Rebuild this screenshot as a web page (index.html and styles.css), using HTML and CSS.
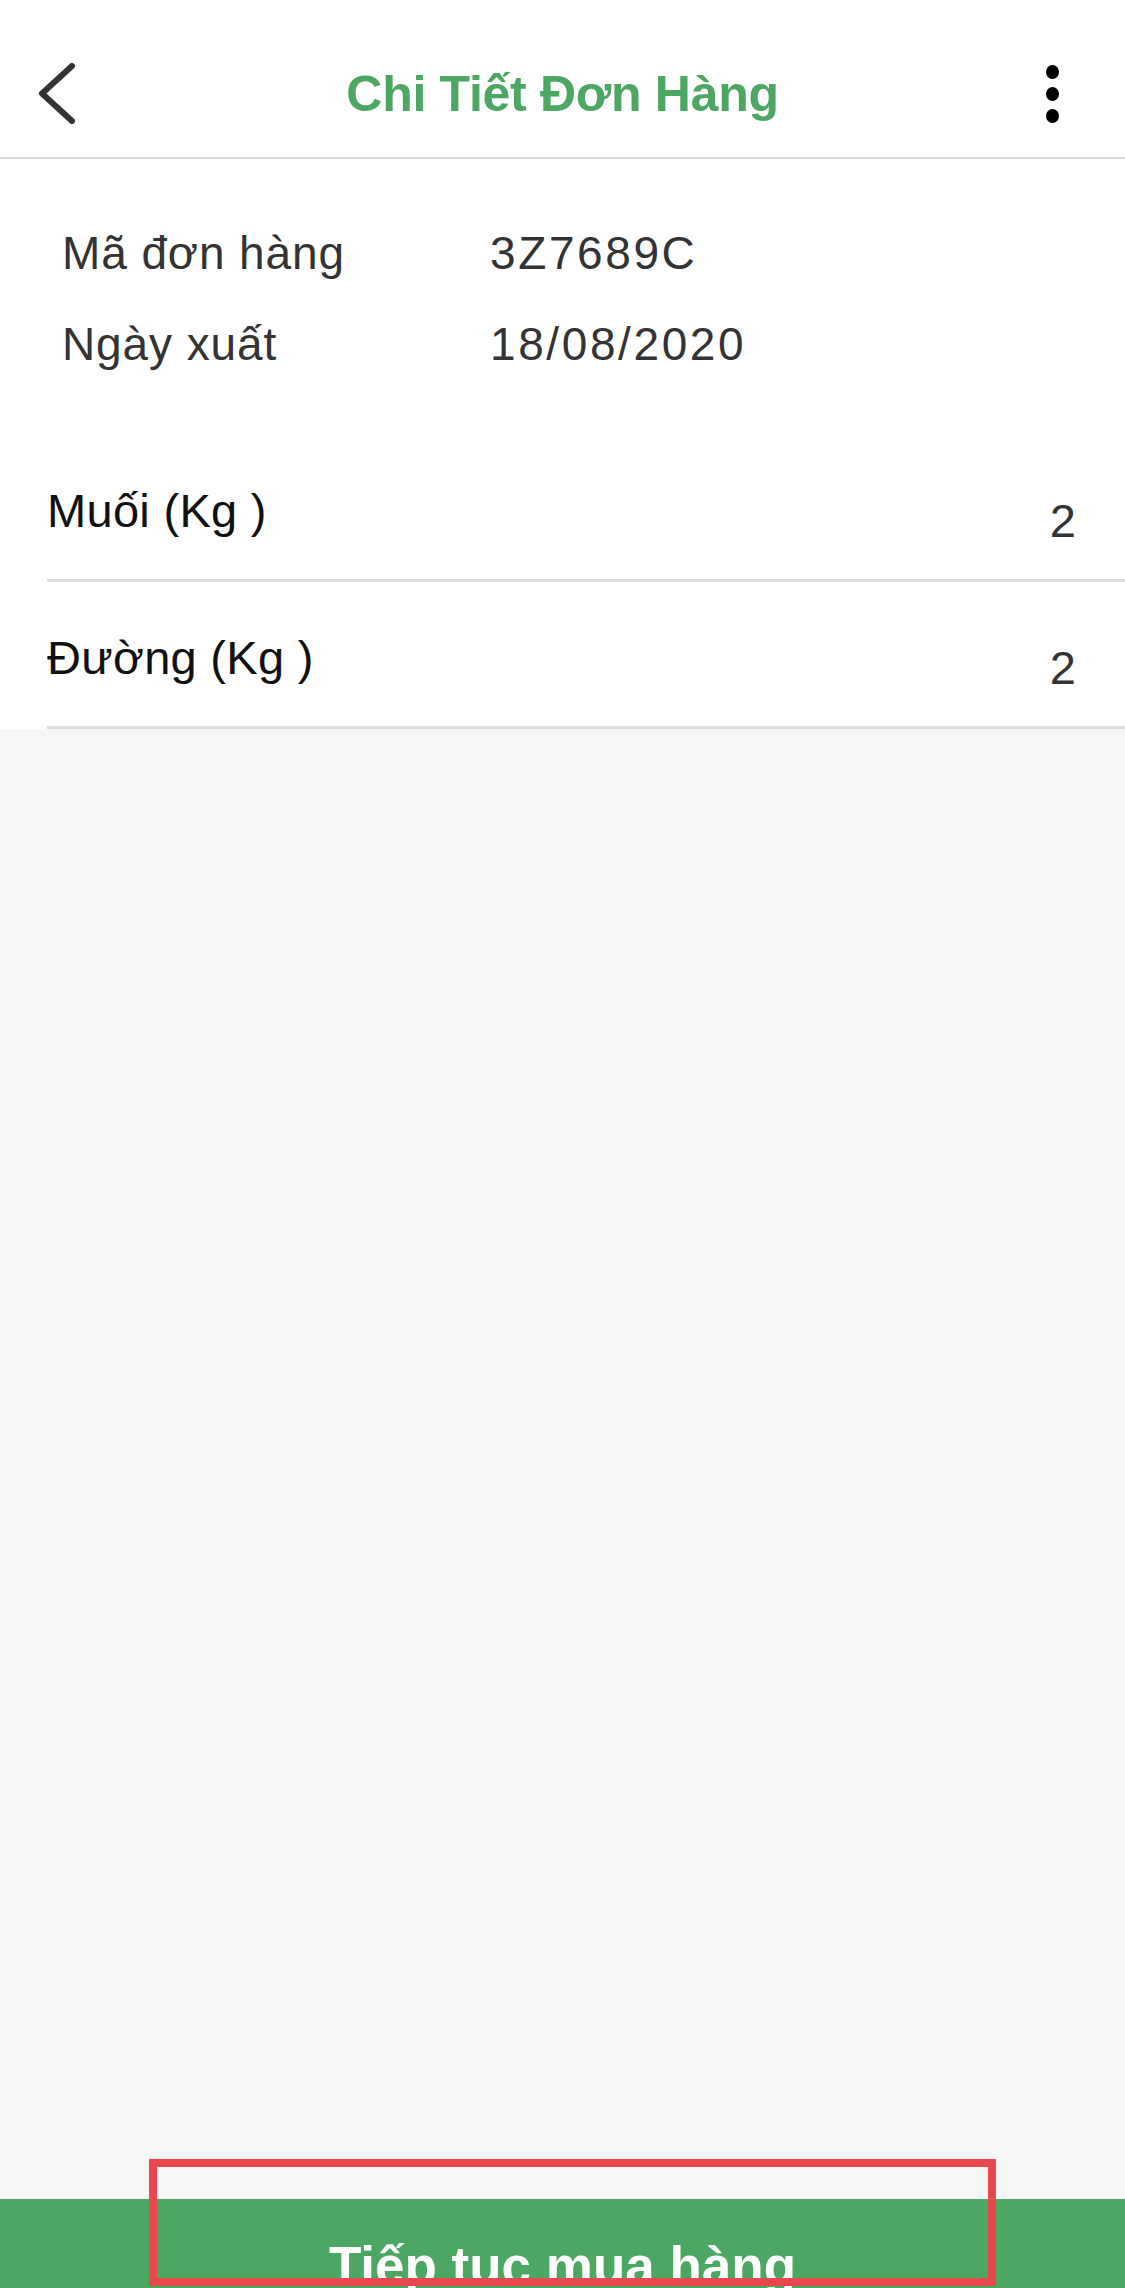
FILE: index.html
```html
<!DOCTYPE html>
<html lang="vi">
<head>
<meta charset="utf-8">
<title>Chi Tiết Đơn Hàng</title>
<link rel="stylesheet" href="styles.css">
</head>
<body>
<div class="screen">
  <header class="topbar">
    <div class="back">
      <svg width="42" height="62" viewBox="0 0 42 62"><polyline points="36,3 6,30.5 36,58" fill="none" stroke="#333" stroke-width="6" stroke-linecap="round" stroke-linejoin="round"/></svg>
    </div>
    <h1 class="title">Chi Tiết Đơn Hàng</h1>
    <div class="more"><span></span><span></span><span></span></div>
  </header>
  <section class="sheet">
    <div class="info">
      <div class="info-row"><span class="info-label">Mã đơn hàng</span><span class="info-value">3Z7689C</span></div>
      <div class="info-row"><span class="info-label">Ngày xuất</span><span class="info-value">18/08/2020</span></div>
    </div>
    <ul class="items">
      <li class="item"><span class="item-name">Muối (Kg )</span><span class="item-qty">2</span></li>
      <li class="item"><span class="item-name">Đường (Kg )</span><span class="item-qty">2</span></li>
    </ul>
  </section>
  <div class="filler"></div>
  <div class="cta">
    <span class="cta-text">Tiếp tục mua hàng</span>
  </div>
  <div class="highlight"></div>
</div>
</body>
</html>
```
FILE: styles.css
```css
html, body {
  margin: 0;
  padding: 0;
}
body {
  background: #f6f6f6;
  font-family: "Liberation Sans", Arial, sans-serif;
  overflow: hidden;
}
.screen {
  position: relative;
  height: 2288px;
  display: flex;
  flex-direction: column;
  overflow: hidden;
}
.topbar {
  background: #fff;
  height: 159px;
  box-sizing: border-box;
  padding-top: 30px;
  border-bottom: 2px solid #d8d8d8;
  display: grid;
  grid-template-columns: 1fr auto 1fr;
  align-items: center;
}
.back {
  padding-left: 36px;
  display: flex;
  align-items: center;
}
.back svg {
  display: block;
}
.title {
  margin: 0;
  font-size: 50px;
  line-height: 50px;
  font-weight: bold;
  color: #4ba762;
  letter-spacing: -0.3px;
}
.more {
  justify-self: end;
  padding-right: 66px;
  display: flex;
  flex-direction: column;
  gap: 8px;
}
.more span {
  display: block;
  width: 13px;
  height: 14px;
  border-radius: 50%;
  background: #000;
}
.sheet {
  background: #fff;
}
.info {
  padding: 64px 0 0 62px;
  display: flex;
  flex-direction: column;
  gap: 31px;
}
.info-row {
  display: grid;
  grid-template-columns: 428px 1fr;
  font-size: 46px;
  line-height: 60px;
  color: #333;
}
.info-label {
  letter-spacing: 0.9px;
}
.info-value {
  letter-spacing: 2.6px;
}
.items {
  list-style: none;
  margin: 61px 0 0 47px;
  padding: 0;
}
.item {
  height: 144px;
  border-bottom: 3px solid #dedede;
  display: flex;
  justify-content: space-between;
  align-items: flex-start;
  padding-right: 49px;
}
.item-name {
  padding-top: 48px;
  font-size: 47px;
  line-height: 56px;
  color: #111;
  letter-spacing: 0.3px;
}
.item-qty {
  padding-top: 58px;
  font-size: 47px;
  line-height: 56px;
  color: #333;
}
.filler {
  flex: 1;
}
.cta {
  background: #4ba762;
  height: 89px;
  box-sizing: border-box;
  flex: none;
  display: flex;
  justify-content: center;
  align-items: flex-start;
  padding-top: 40px;
}
.cta-text {
  color: #fff;
  font-weight: bold;
  font-size: 53px;
  line-height: 53px;
  white-space: nowrap;
}
.highlight {
  position: absolute;
  left: 149px;
  top: 2159px;
  width: 847px;
  height: 127px;
  box-sizing: border-box;
  border: 8px solid #e8474e;
}
```
